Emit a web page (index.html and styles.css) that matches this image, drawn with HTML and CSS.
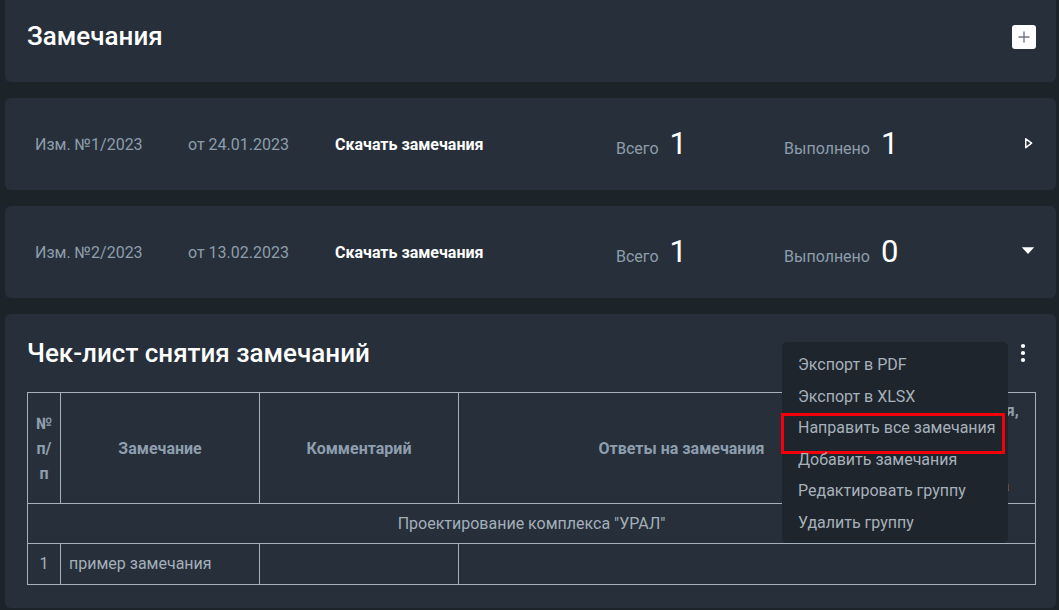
FILE: index.html
```html
<!DOCTYPE html>
<html lang="ru">
<head>
<meta charset="utf-8">
<title>Замечания</title>
<link rel="stylesheet" href="styles.css">
</head>
<body>
<div class="page">
  <section class="card head-card">
    <h1 class="page-title">Замечания</h1>
    <button class="add-btn" type="button" aria-label="Добавить">
      <svg width="14" height="14" viewBox="0 0 14 14"><path d="M7 1.5v11M1.5 7h11" stroke="#6d7b89" stroke-width="1.4" fill="none"/></svg>
    </button>
  </section>

  <section class="card rev-card">
    <span class="rev-text">Изм. №1/2023</span>
    <span class="rev-text">от 24.01.2023</span>
    <span class="download">Скачать замечания</span>
    <div class="stat"><span class="stat-label">Всего</span><span class="stat-value">1</span></div>
    <div class="stat"><span class="stat-label">Выполнено</span><span class="stat-value">1</span></div>
    <span class="toggle">
      <svg width="14" height="14" viewBox="0 0 14 14"><path d="M4.75 1.8L10.6 6.2L4.75 10.6Z" fill="none" stroke="#fff" stroke-width="1.5" stroke-linejoin="round"/></svg>
    </span>
  </section>

  <section class="card rev-card">
    <span class="rev-text">Изм. №2/2023</span>
    <span class="rev-text">от 13.02.2023</span>
    <span class="download">Скачать замечания</span>
    <div class="stat"><span class="stat-label">Всего</span><span class="stat-value">1</span></div>
    <div class="stat"><span class="stat-label">Выполнено</span><span class="stat-value">0</span></div>
    <span class="toggle">
      <svg width="14" height="14" viewBox="0 0 14 14"><path d="M0.8 2.2H13.2L7 9Z" fill="#fff"/></svg>
    </span>
  </section>

  <section class="card checklist">
    <div class="checklist-head">
      <h2 class="checklist-title">Чек-лист снятия замечаний</h2>
      <button class="more-btn" type="button" aria-label="Меню">
        <svg width="24" height="24" viewBox="0 0 24 24"><circle cx="12" cy="5" r="2.1" fill="#fff"/><circle cx="12" cy="12" r="2.1" fill="#fff"/><circle cx="12" cy="19" r="2.1" fill="#fff"/></svg>
      </button>
    </div>
    <table class="grid">
      <colgroup>
        <col class="c1"><col class="c2"><col class="c3"><col class="c4"><col class="c5">
      </colgroup>
      <thead>
        <tr>
          <th class="num-th">№<br>п/<br>п</th>
          <th>Замечание</th>
          <th>Комментарий</th>
          <th>Ответы на замечания</th>
          <th>Дата снятия,<br>ФИО<br>и подпись<br>заказчика</th>
        </tr>
      </thead>
      <tbody>
        <tr class="group-row"><td colspan="5">Проектирование комплекса "УРАЛ"</td></tr>
        <tr class="data-row">
          <td class="num">1</td>
          <td>пример замечания</td>
          <td></td>
          <td colspan="2"></td>
        </tr>
      </tbody>
    </table>
    <ul class="menu">
      <li class="menu-item">Экспорт в PDF</li>
      <li class="menu-item">Экспорт в XLSX</li>
      <li class="menu-item highlighted">Направить все замечания</li>
      <li class="menu-item">Добавить замечания</li>
      <li class="menu-item">Редактировать группу</li>
      <li class="menu-item">Удалить группу</li>
    </ul>
  </section>
</div>
</body>
</html>
```

FILE: styles.css
```css
* { box-sizing: border-box; }

html, body {
  margin: 0;
  background: #1c2329;
  font-family: Roboto, "Noto Sans", sans-serif;
  overflow: hidden;
}

.page {
  display: flex;
  flex-direction: column;
  gap: 16px;
  padding: 0 3px 0 5px;
}

.card {
  background: #27303a;
  border-radius: 6px;
}

.head-card {
  height: 82px;
  border-radius: 0 0 6px 6px;
  display: flex;
  justify-content: space-between;
  align-items: center;
  align-self: stretch;
  padding: 0 20px 0 22px;
}

.head-inner { display: flex; }

.page-title {
  margin: 0 0 10px;
  font-size: 26px;
  line-height: 26px;
  font-weight: 500;
  color: #fff;
}

.add-btn {
  width: 24px;
  height: 24px;
  margin-bottom: 8px;
  border: 0;
  padding: 0;
  border-radius: 3px;
  background: #fff;
  display: flex;
  align-items: center;
  justify-content: center;
}

.rev-card {
  height: 92px;
  display: grid;
  grid-template-columns: 153px 147px 281px 168px 1fr 14px;
  align-items: center;
  padding: 0 21px 0 30px;
}

.rev-text {
  font-size: 16px;
  line-height: 19px;
  color: #8d9dac;
}

.download {
  font-size: 16px;
  line-height: 19px;
  font-weight: 700;
  color: #fff;
}

.stat {
  display: flex;
  align-items: baseline;
  gap: 11px;
}

.stat-label {
  font-size: 16px;
  color: #8d9dac;
}

.stat-value {
  font-size: 31px;
  color: #fff;
  line-height: 36px;
}

.toggle {
  display: flex;
  width: 14px;
  height: 14px;
}

.checklist {
  position: relative;
  padding: 0 21px 23px 22px;
}

.checklist-head {
  height: 26px;
  margin: 26px 0;
  display: flex;
  justify-content: space-between;
  align-items: center;
}

.checklist-title {
  margin: 0;
  font-size: 26px;
  line-height: 26px;
  font-weight: 500;
  color: #fff;
}

.more-btn {
  width: 24px;
  height: 24px;
  padding: 0;
  border: 0;
  background: transparent;
  display: flex;
}

.grid {
  width: 100%;
  border-collapse: collapse;
  table-layout: fixed;
  border: 1px solid #a5b1bc;
}

.c1 { width: 33px; }
.c2 { width: 199px; }
.c3 { width: 199px; }
.c4 { width: 446px; }
.c5 { width: 131px; }

.grid th,
.grid td {
  border: 1px solid #a5b1bc;
}

.grid th {
  font-size: 16px;
  font-weight: 700;
  line-height: 25px;
  color: #8e9eae;
  padding: 5px 8px;
  text-align: center;
  vertical-align: middle;
}

.grid .num-th {
  padding: 5px 2px;
}

.group-row td {
  text-align: center;
  font-size: 16px;
  line-height: 19px;
  padding: 10px 8px;
  color: #a3afbb;
}

.data-row td {
  font-size: 16px;
  line-height: 20px;
  padding: 10px 8px;
  color: #a3afbb;
}

.data-row .num {
  text-align: center;
  padding: 10px 2px;
}

.menu {
  position: absolute;
  top: 28px;
  right: 48px;
  width: 226px;
  margin: 0;
  padding: 7px 0 4px;
  list-style: none;
  background: #1e252c;
  border-radius: 5px;
  z-index: 2;
}

.menu-item {
  position: relative;
  padding: 0 16px;
  font-size: 16px;
  line-height: 31.6px;
  color: #a7b1bb;
  white-space: nowrap;
}

.menu-item.highlighted::after {
  content: "";
  position: absolute;
  left: -1px;
  right: 3px;
  top: 1px;
  height: 35px;
  border: 3px solid #f4000a;
}
```
